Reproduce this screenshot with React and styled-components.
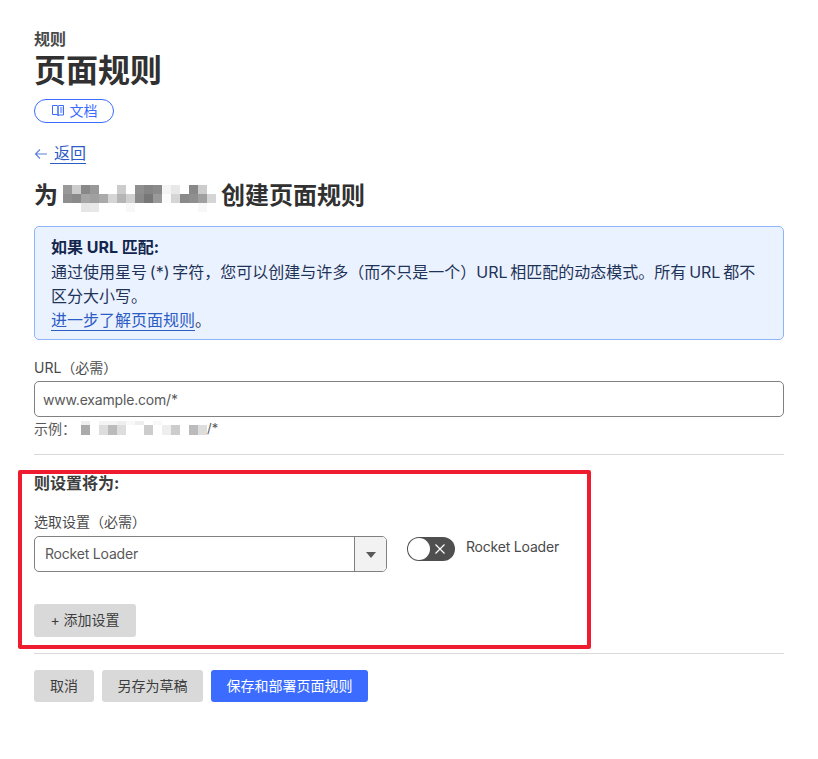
import styled, { createGlobalStyle } from "styled-components";

const GlobalStyles = createGlobalStyle`
  html, body {
    margin: 0;
    padding: 0;
    background: #fff;
    color: #313131;
    font-family: Inter, "Noto Sans CJK SC", sans-serif;
  }
  * { box-sizing: border-box; }
`;

const MOSAIC_TITLE = [
  ["#999", "#ccc", "#888", "#999", "#fff", "#fff", "#ccc", "#fff", "#8f8f8f", "#858585", "#8a8a8a", "#f4f4f4", "#e8e8e8", "#fff", "#888", "#ccc", "#fff"],
  ["#8f8f8f", "#8a8a8a", "#a5a5a5", "#a0a0a0", "#aaa", "#d5d5d5", "#b5b5b5", "#d0d0d0", "#8a8a8a", "#777", "#999", "#fbfbfb", "#d5d5d5", "#8a8a8a", "#8f8f8f", "#a0a0a0", "#d5d5d5"],
  ["#fff", "#fff", "#e5e5e5", "#e8e8e8", "#fff", "#fff", "#fff", "#f8f8f8", "#fff", "#fff", "#fff", "#fff", "#fff", "#fff", "#fff", "#f8f8f8", "#fff"],
];

const MOSAIC_EXAMPLE = [
  ["#eee", "#fff", "#f4f4f4", "#f4f4f4", "#eee", "#f8f8f8", "#eee", "#fff", "#f8f8f8", "#fff", "#fff", "#fff", "#fff", "#fff"],
  ["#aaa", "#fff", "#ddd", "#bbb", "#ddd", "#fff", "#fff", "#ccc", "#fff", "#eee", "#ccc", "#fff", "#bbb", "#ddd"],
];

function Mosaic({ rows, cellHeights, className }) {
  let y = 0;
  const width = rows[0].length * 9;
  const height = cellHeights.reduce((a, b) => a + b, 0);
  return (
    <svg className={className} width={width} height={height} viewBox={`0 0 ${width} ${height}`} shapeRendering="crispEdges">
      {rows.map((row, r) => {
        const top = y;
        y += cellHeights[r];
        return row.map((fill, c) => (
          <rect key={`${r}-${c}`} x={c * 9} y={top} width="9" height={cellHeights[r]} fill={fill} />
        ));
      })}
    </svg>
  );
}

function BookIcon() {
  return (
    <svg width="14" height="14" viewBox="0 0 14 14" fill="none" stroke="#3b6cff" strokeWidth="1">
      <path d="M1.500 2.500h4.500l1 .8v9l-1-.8H1.500z" />
      <path d="M7 3.300l1-.8h4.500v9.500H8l-1 .8z" />
      <path d="M9 5h2.500M9 7h2.500M9 9h2.500" />
    </svg>
  );
}

function BackArrow() {
  return (
    <svg width="14" height="12" viewBox="0 0 14 12" fill="none" stroke="#5a7fdc" strokeWidth="1.100">
      <path d="M13 6H1.500M6 1.500L1.500 6 6 10.500" />
    </svg>
  );
}

function App() {
  return (
    <Page>
      <GlobalStyles />
      <Eyebrow>规则</Eyebrow>
      <Title>页面规则</Title>
      <DocsPill>
        <BookIcon />
        文档
      </DocsPill>
      <BackRow>
        <BackArrow />
        <BackLink>返回</BackLink>
      </BackRow>
      <Subtitle>
        为
        <TitleMosaic rows={MOSAIC_TITLE} cellHeights={[9, 9, 9]} />
        创建页面规则
      </Subtitle>
      <Callout>
        <CalloutTitle>如果 URL 匹配:</CalloutTitle>
        <div>通过使用星号 (*) 字符，您可以创建与许多（而不只是一个）URL 相匹配的动态模式。所有 URL 都不区分大小写。</div>
        <div>
          <CalloutLink>进一步了解页面规则</CalloutLink>。
        </div>
      </Callout>
      <FieldLabel>URL（必需）</FieldLabel>
      <UrlInput>www.example.com/*</UrlInput>
      <ExampleRow>
        示例：
        <ExampleMosaic rows={MOSAIC_EXAMPLE} cellHeights={[4, 10]} />
        <ExampleSuffix>/*</ExampleSuffix>
      </ExampleRow>
      <Divider />
      <SectionTitle>则设置将为:</SectionTitle>
      <SettingLabel>选取设置（必需）</SettingLabel>
      <SettingRow>
        <Select>
          <SelectValue>Rocket Loader</SelectValue>
          <SelectArrow>
            <Caret />
          </SelectArrow>
        </Select>
        <Toggle>
          <ToggleKnob />
          <svg width="12" height="12" viewBox="0 0 12 12" fill="none" stroke="#fff" strokeWidth="1.200">
            <path d="M1.500 1.500l9 9M10.500 1.500l-9 9" />
          </svg>
        </Toggle>
        <ToggleLabel>Rocket Loader</ToggleLabel>
      </SettingRow>
      <AddButton>+ 添加设置</AddButton>
      <FooterDivider />
      <Actions>
        <Button $width={60}>取消</Button>
        <Button $width={101}>另存为草稿</Button>
        <Button $width={157} $primary>
          保存和部署页面规则
        </Button>
      </Actions>
      <Highlight />
    </Page>
  );
}

const Page = styled.div`
  position: relative;
  width: 818px;
  height: 759px;
  padding: 28px 34px 0;
  background: #fff;
  overflow: hidden;
`;

const Eyebrow = styled.div`
  font-size: 16px;
  line-height: 22px;
  font-weight: 600;
  color: #4a4a4a;
`;

const Title = styled.h1`
  margin: 0;
  font-size: 32px;
  line-height: 42px;
  font-weight: 700;
  color: #313131;
`;

const DocsPill = styled.div`
  display: flex;
  align-items: center;
  justify-content: center;
  gap: 5px;
  width: 80px;
  height: 24px;
  margin-top: 7px;
  padding-bottom: 2px;
  border: 1px solid #3b6cff;
  border-radius: 12px;
  color: #3b6cff;
  font-size: 14px;
`;

const BackRow = styled.div`
  display: flex;
  align-items: center;
  height: 24px;
  margin-top: 19px;
  font-size: 16px;
`;

const BackLink = styled.span`
  color: #2c5cc5;
  border-bottom: 1px solid #2c5cc5;
  line-height: 19px;
  margin-left: 2px;
  padding-left: 4px;
`;

const Subtitle = styled.h2`
  display: flex;
  align-items: center;
  margin: 11px 0 0;
  height: 32px;
  font-size: 24px;
  font-weight: 700;
  color: #313131;
`;

const TitleMosaic = styled(Mosaic)`
  margin: 0 5px 0 5px;
  position: relative;
  top: 5px;
`;

const ExampleMosaic = styled(Mosaic)`
  margin-left: 5px;
`;

const ExampleSuffix = styled.span`
  font-size: 13px;
`;

const Callout = styled.div`
  margin-top: 17px;
  height: 114px;
  padding: 8px 16px 0;
  border: 1px solid #8fb4f8;
  border-radius: 5px;
  background: #ebf2ff;
  color: #1f3358;
  font-size: 16px;
  line-height: 24px;
  word-spacing: -1.700px;
`;

const CalloutTitle = styled.div`
  margin-bottom: 1px;
  font-weight: 700;
  color: #12264d;
  word-spacing: 0;
`;

const CalloutLink = styled.span`
  color: #2c5cc5;
  border-bottom: 1px solid #2c5cc5;
`;

const FieldLabel = styled.div`
  margin-top: 17px;
  height: 20px;
  font-size: 14px;
  line-height: 21px;
  color: #4a4a4a;
`;

const UrlInput = styled.div`
  display: flex;
  align-items: center;
  height: 36px;
  margin-top: 4px;
  padding: 0 8px;
  border: 1px solid #808080;
  border-radius: 5px;
  font-size: 14px;
  letter-spacing: -0.180px;
  color: #595959;
`;

const ExampleRow = styled.div`
  display: flex;
  align-items: center;
  height: 22px;
  font-size: 14px;
  color: #595959;
`;

const Divider = styled.div`
  height: 1px;
  margin-top: 15px;
  background: #d9d9d9;
`;

const SectionTitle = styled.div`
  margin-top: 17px;
  height: 25px;
  font-size: 16px;
  line-height: 22px;
  font-weight: 700;
  color: #3d3d3d;
`;

const SettingLabel = styled.div`
  margin-top: 15px;
  height: 20px;
  font-size: 14px;
  line-height: 20px;
  color: #4a4a4a;
`;

const SettingRow = styled.div`
  display: flex;
  align-items: flex-start;
  margin-top: 4px;
`;

const Select = styled.div`
  display: flex;
  width: 353px;
  height: 36px;
  border: 1px solid #808080;
  border-radius: 5px;
  overflow: hidden;
`;

const SelectValue = styled.div`
  flex: 1;
  padding-left: 10px;
  font-size: 14px;
  letter-spacing: -0.200px;
  line-height: 34px;
  color: #595959;
`;

const SelectArrow = styled.div`
  display: flex;
  align-items: center;
  justify-content: center;
  width: 32px;
  border-left: 1px solid #808080;
  background: #f2f2f2;
`;

const Caret = styled.div`
  width: 0;
  height: 0;
  margin-top: 1px;
  border-left: 5px solid transparent;
  border-right: 5px solid transparent;
  border-top: 6px solid #595959;
`;

const Toggle = styled.div`
  display: flex;
  align-items: center;
  justify-content: flex-end;
  width: 48px;
  height: 24px;
  margin: 1px 0 0 20px;
  padding-right: 9px;
  border-radius: 12px;
  background: #4f4f4f;
`;

const ToggleKnob = styled.div`
  width: 22px;
  height: 22px;
  margin-right: auto;
  margin-left: 1px;
  border-radius: 50%;
  background: #fff;
`;

const ToggleLabel = styled.div`
  margin-left: 11px;
  font-size: 14px;
  letter-spacing: -0.200px;
  line-height: 22px;
  color: #4a4a4a;
`;

const AddButton = styled.div`
  display: flex;
  align-items: center;
  justify-content: center;
  width: 102px;
  height: 33px;
  margin-top: 32px;
  padding-bottom: 3px;
  border-radius: 3px;
  background: #d9d9d9;
  font-size: 14px;
  color: #3d3d3d;
`;

const FooterDivider = styled(Divider)`
  margin-top: 16px;
`;

const Actions = styled.div`
  display: flex;
  gap: 8px;
  margin-top: 16px;
`;

const Button = styled.div`
  display: flex;
  align-items: center;
  justify-content: center;
  width: ${(p) => p.$width}px;
  height: 32px;
  padding-bottom: 3px;
  border-radius: 3px;
  background: ${(p) => (p.$primary ? "#3b6cff" : "#d9d9d9")};
  color: ${(p) => (p.$primary ? "#fff" : "#3d3d3d")};
  font-size: 14px;
`;

const Highlight = styled.div`
  position: absolute;
  left: 18px;
  top: 470px;
  width: 573px;
  height: 179px;
  border: 4px solid #ee1c2e;
  border-radius: 2px;
  pointer-events: none;
`;

export default App;
